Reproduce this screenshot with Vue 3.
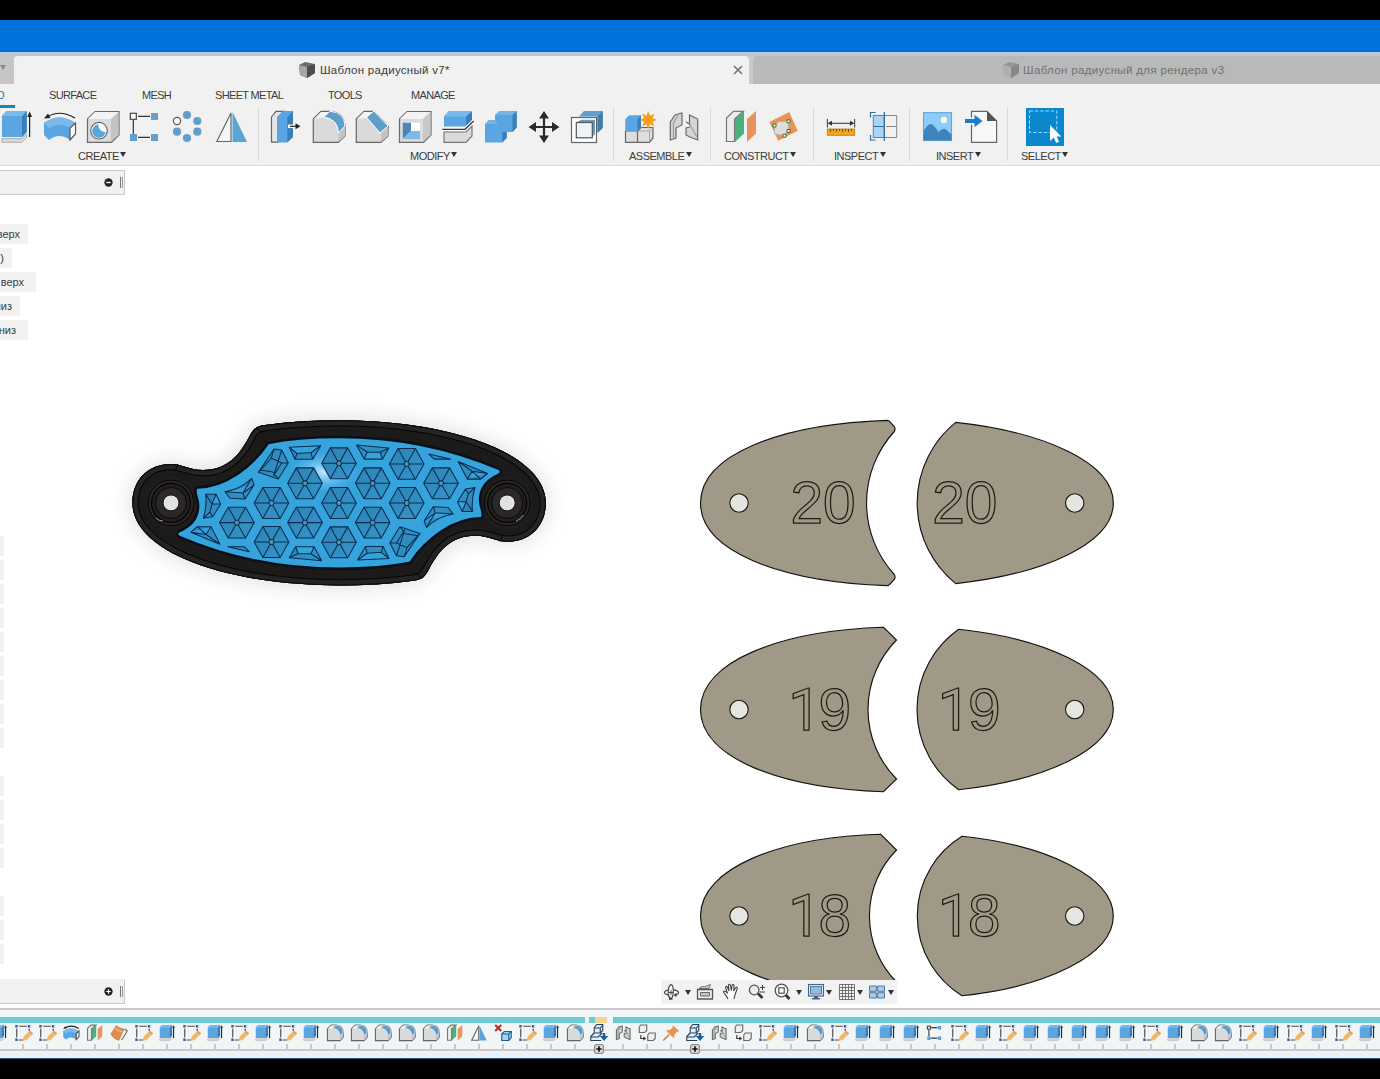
<script setup>
const groups = [
  { id: 'create', label: 'CREATE', icons: ['extrude', 'revolve', 'hole', 'pattern', 'circular', 'mirror'] },
  { id: 'modify', label: 'MODIFY', icons: ['press', 'fillet', 'chamfer', 'shell', 'split', 'combine', 'move', 'offset'] },
  { id: 'assemble', label: 'ASSEMBLE', icons: ['component', 'joint'] },
  { id: 'construct', label: 'CONSTRUCT', icons: ['plane', 'planepts'] },
  { id: 'inspect', label: 'INSPECT', icons: ['measure', 'section'] },
  { id: 'insert', label: 'INSERT', icons: ['image', 'derive'] },
  { id: 'select', label: 'SELECT', icons: ['select'] }
]

const ribbonTabs = [
  { text: 'SURFACE', cls: 'w93' },
  { text: 'MESH', cls: 'w73' },
  { text: 'SHEET METAL', cls: 'w113' },
  { text: 'TOOLS', cls: 'w83' },
  { text: 'MANAGE', cls: 'w83' }
]

const browserRows = [
  { text: 'верх', width: 28 },
  { text: ')', width: 12 },
  { text: 'верх', width: 36 },
  { text: 'низ', width: 20 },
  { text: 'низ', width: 28 }
]
const stubs = Array.from({ length: 18 }, (_, i) => i !== 9 && i !== 14)

const codes = {
  e: 'extrude', s: 'sketch', r: 'revolve', p: 'plane', o: 'patch', f: 'fillet', m: 'mirror',
  x: 'remove', i: 'insertcomp', j: 'joint', g: 'rigid', n: 'pin', t: 'pattern'
}
const features = [...'essrposesesesefffffpmxsefijgnijgsefseeetseseeeeeseffsesese'].map((c) => codes[c])

const nav = [
  { icon: 'orbit', gap: 1 }, { caret: true, gap: 2 },
  { icon: 'look', gap: 3 }, { icon: 'hand', gap: 6 }, { icon: 'zoom', gap: 6 }, { icon: 'fit', gap: 6 },
  { caret: true, gap: 2 }, { icon: 'display', gap: 3 }, { caret: true, gap: -1 },
  { icon: 'grid', gap: 4 }, { caret: true, gap: -1 }, { icon: 'views', gap: 3 }, { caret: true, gap: 0 }
]

// The handle body has two-fold rotational symmetry about this point.
const C = [339.1, 502.9]
const turn = ([x, y]) => [2 * C[0] - x, 2 * C[1] - y]
const cubic = (pts) => {
  let d = ''
  for (let i = 0; i < pts.length; i += 3) d += 'C' + pts.slice(i, i + 3).map((p) => p.join(' ')).join(' ')
  return d
}
const symmetric = (start, pts) => 'M' + start.join(' ') + cubic(pts) + cubic(pts.map(turn)) + 'Z'

const body = symmetric([132.4, 502.9], [
  [132.4, 480], [148, 464], [171, 464],
  [183, 464], [188, 470], [203, 470],
  [228, 470], [240, 454], [249, 437],
  [253, 429], [256, 426], [265, 425],
  [290, 421.5], [315, 420.3], [339, 420.3],
  [384, 420.3], [446, 426], [494, 447],
  [530, 463], [545.8, 483], [545.8, 502.9]
])
const insert = symmetric([196.5, 487.5], [
  [225, 488], [253, 466], [268, 443],
  [290, 438.5], [315, 437], [339, 437],
  [395, 437], [450, 448], [499, 469],
  [502, 471], [502, 473], [498, 475],
  [487, 480], [480, 487], [480, 500],
  [480, 508], [485, 513], [481.7, 518.3]
])

const hexCenters = [
  [339, 463.3], [406.7, 463.9], [305, 483.3], [372.7, 483.3], [441, 483.3],
  [271.5, 503], [339, 503], [406.7, 503],
  [236.9, 522.6], [305, 522.6], [372.7, 522.6], [271.5, 542], [339, 542.3]
]
const corners = (cx, cy, r) =>
  Array.from({ length: 6 }, (_, i) => [cx + r * Math.cos((i * Math.PI) / 3), cy + r * 1.03 * Math.sin((i * Math.PI) / 3)])
const hexes = hexCenters.map(([cx, cy]) => {
  const o = corners(cx, cy, 17.3)
  const n = corners(cx, cy, 2.7)
  return {
    outer: o.join(' '),
    inner: n.join(' '),
    rays: o.map((p, i) => `M${p.join(' ')}L${n[i].join(' ')}`).join('')
  }
})
const cells = [
  'M274 449L281.7 450L288.3 462.7L278.3 479L258.3 472.3ZM274 449L271.5 458L281.7 463L273.5 476M271.5 458L258.3 472.3M281.7 450L273.5 476M288.3 462.7L281.7 463M260 470L273 472L278.3 479',
  'M289.3 447.3L320.7 445.7L312.7 459.3L295 459.3ZM289.3 447.3L297 453.5L311 452.5L320.7 445.7M297 453.5L295 459.3M311 452.5L312.7 459.3',
  'M225 491.7Q241 489 251.7 478.3L254 485L245 499L230 498.3ZM225 491.7L243 493L254 485M243 493L245 499M243 493L251.7 478.3',
  'M205.7 494.3L216 494.3L220.7 504L212.7 516.7L203.3 518.3Q207 506 205.7 494.3ZM216 494.3L212 504L220.7 504M212 504L210 512L203.3 518.3M205.7 494.3L212 504M210 512L212.7 516.7',
  'M190.7 532.3L197.3 526.7L211 526.7L220 544.3ZM190.7 532.3L206 534.5L211 526.7M206 534.5L220 544.3M197.3 526.7L206 534.5',
  'M227.7 546.7L244 546.7L249.3 551.7Z',
  'M295.7 546.7L314 546.7L321.7 560.7L289.3 557.7ZM295.7 546.7L298 553.5L311 553.8L314 546.7M298 553.5L289.3 557.7M311 553.8L321.7 560.7'
]

const plates = [
  { n: '20', cy: 503, tip: [887, 82.6], lip: [894.3, 71.5], neck: 106, shoulder: [955.7, 80.6], belly: 103.6, rx: 932.3, round: true },
  { n: '19', cy: 709.5, tip: [883.5, 82.2], lip: [896.5, 69.5], neck: 99, shoulder: [958.7, 80.2], belly: 98, rx: 939.5 },
  { n: '18', cy: 916, tip: [880.5, 81.8], lip: [896.5, 66], neck: 94, shoulder: [962, 79.7], belly: 93.4, rx: 939.5 }
].map((p) => {
  const [tx, th] = p.tip
  const [lx, lh] = p.lip
  const [sx, sh] = p.shoulder
  const y = p.cy
  const cornerA = p.round ? `Q${tx + 2} ${y - th} ${tx + 3} ${y - th + 1.5}L${lx} ${y - lh - 5}Q${lx + 1.5} ${y - lh - 2.5} ${lx} ${y - lh}` : `L${lx} ${y - lh}`
  const cornerB = p.round ? `Q${lx + 1.5} ${y + lh + 2.5} ${lx} ${y + lh + 5}L${tx + 3} ${y + th - 1.5}Q${tx + 2} ${y + th} ${tx} ${y + th}` : `L${tx} ${y + th}`
  return {
    ...p,
    left: `M700.5 ${y}C700.5 ${y - 48} 780 ${y - 79} ${tx} ${y - th}${cornerA}A${p.neck} ${p.neck} 0 0 0 ${lx} ${y + lh}${cornerB}C780 ${y + 79} 700.5 ${y + 48} 700.5 ${y}Z`,
    right: `M${sx} ${y - sh}C1045 ${y - 71} 1113.3 ${y - 40} 1113.3 ${y}C1113.3 ${y + 40} 1045 ${y + 71} ${sx} ${y + sh}A${p.belly} ${p.belly} 0 0 1 ${sx} ${y - sh}Z`
  }
})
</script>

<template>
  <div class="app">
    <svg class="defs" width="0" height="0" aria-hidden="true">
      <symbol id="extrude" viewBox="0 0 43 40">
        <path d="M7 9L11.5 4H31.7V25L27 30H7Z" fill="#5aa5e2" /><path d="M27 9L31.7 4V25L27 30Z" fill="#3b7fba" /><path d="M7 9L11.5 4H31.7L27 9Z" fill="#79b9ec" />
        <path d="M7 31.5H27L31.7 27V30.5L27 35.3H7Z" fill="#d8d8d8" stroke="#999" stroke-width=".7" />
        <path d="M34.6 30V6" stroke="#222" fill="none" /><path d="M32.3 10L34.6 4.5L37 10Z" fill="#222" />
      </symbol>
      <symbol id="revolve" viewBox="0 0 43 40">
        <path d="M6 16Q21 5 37.5 16L32 33Q21 25 11 33L6 28Z" fill="#5aa5e2" /><path d="M6 16Q21 5 37.5 16L32 21Q21 14 11 21Z" fill="#79b9ec" />
        <path d="M32 21L37.5 16V27L32 33Z" fill="#fff" stroke="#555" /><path d="M9 10Q22 2 37 11" fill="none" stroke="#222" /><path d="M6 11.5L10 6.5L12.5 11Z" fill="#222" />
      </symbol>
      <symbol id="hole" viewBox="0 0 43 40">
        <path d="M6.5 12L14 4.5H38V28L30.5 35.3H6.5Z" fill="#dcdcdc" stroke="#6a6a6a" /><path d="M7 12L14 5H37.5L30 12Z" fill="#f3f3f3" /><path d="M30 12L37.5 5V28L30 35Z" fill="#c3c3c3" />
        <circle cx="18" cy="23.7" r="8.3" fill="#fff" stroke="#666" /><path d="M17 17.3A6.8 6.8 0 1 0 24.7 25Q18 25 17 17.3Z" fill="#5aa5d8" />
      </symbol>
      <symbol id="pattern" viewBox="0 0 43 40">
        <path d="M9.3 13V27M14 9.3H26M14 30.3H26" stroke="#333" fill="none" /><rect x="6.3" y="6.3" width="6" height="6" fill="#fff" stroke="#444" />
        <path d="M27 6h7v7h-7zM6 27h7v7H6zM27 27h7v7h-7z" fill="#679fcb" />
      </symbol>
      <symbol id="circular" viewBox="0 0 43 40">
        <g fill="#639dca"><circle cx="20" cy="8" r="4.1" /><circle cx="30.3" cy="14" r="4.1" /><circle cx="30.3" cy="24.7" r="4.1" /><circle cx="20" cy="31" r="4.1" /><circle cx="10" cy="24.7" r="4.1" /></g><circle cx="10" cy="14" r="3.6" fill="#fff" stroke="#555" />
      </symbol>
      <symbol id="mirror" viewBox="0 0 43 40"><path d="M6.8 34.5L21 6V34.5Z" fill="#f6f6f6" stroke="#666" /><path d="M22.5 5L37 35H22.5Z" fill="#5aa5d8" /></symbol>
      <symbol id="press" viewBox="0 0 43 40">
        <path d="M7.5 10L12 4.3H20L14 10V35.2H7.5Z" fill="#e6e6e6" stroke="#666" /><path d="M13.5 10L19 4H29V30L23.3 35.5H13.5Z" fill="#5aa5e2" /><path d="M23.3 10L29 4V30L23.3 35.5Z" fill="#3b7fba" />
        <path d="M24 19.3H32" stroke="#fff" stroke-width="3.5" /><path d="M26 19.3H32" stroke="#222" /><path d="M31.5 16.3L36.5 19.3L31.5 22.3Z" fill="#222" />
      </symbol>
      <symbol id="fillet" viewBox="0 0 43 40">
        <path d="M6.3 12L14 4.3H23Q38 5 38 20V29L31.3 35.3H6.3Z" fill="#dadada" stroke="#666" /><path d="M7 12L14 5H23L17 10Z" fill="#f4f4f4" /><path d="M31.5 26L38 20V29L31.5 35Z" fill="#c2c2c2" />
        <path d="M16.5 10L23 4.3Q37.8 5 38 19L31.5 26Q31 12 16.5 10Z" fill="#5c9fcd" stroke="#fff" stroke-width="1" />
      </symbol>
      <symbol id="chamfer" viewBox="0 0 43 40">
        <path d="M6.3 12L14 4.3H24L38 19V29L31 35.3H6.3Z" fill="#dadada" stroke="#666" /><path d="M7 12L14 5H23L17 11Z" fill="#f4f4f4" /><path d="M31 26L38 20V29L31 35Z" fill="#c2c2c2" /><path d="M16.5 10.3L24 4L38 19L30 26Z" fill="#5c9fcd" stroke="#fff" stroke-width="1" />
      </symbol>
      <symbol id="shell" viewBox="0 0 43 40">
        <path d="M6.5 12L14 4.5H38V28L30.5 35.3H6.5Z" fill="#dcdcdc" stroke="#6a6a6a" /><path d="M7 12L14 5H37.5L30 12Z" fill="#f3f3f3" /><path d="M30 12L37.5 5V28L30 35Z" fill="#c8c8c8" />
        <path d="M9.7 15.7H27V32.3H9.7Z" fill="#fff" /><path d="M9.7 15.7L18 15.7V24L9.7 32.3Z" fill="#4a87b8" /><path d="M18 24H27V32.3H9.7Z" fill="#7cb9e6" />
      </symbol>
      <symbol id="split" viewBox="0 0 43 40">
        <path d="M8 9.5L13 4H36V13L30 19.5H8Z" fill="#5aa5e2" /><path d="M30 9.5L36 4V13L30 19.5Z" fill="#3b7fba" /><path d="M8 9.5L13 4H36L30 9.5Z" fill="#79b9ec" />
        <path d="M8 25H30L36 19V29L30 35.3H8Z" fill="#dadada" stroke="#777" /><path d="M6.3 22.3H29L37.7 14" fill="none" stroke="#fff" stroke-width="3.5" /><path d="M6.3 22.3H29L37.7 14" fill="none" stroke="#333" />
      </symbol>
      <symbol id="combine" viewBox="0 0 43 40">
        <path d="M6 17L10 13H16V8L20.5 4H37.7V20.5L33.7 25H27.7V31L23.3 35.5H6Z" fill="#5aa5e2" /><path d="M33.5 8L37.7 4V20.5L33.5 25ZM23.3 25L27.7 25V31L23.3 35.5Z" fill="#3b7fba" /><path d="M16 8L20.5 4H37.7L33.5 8ZM6 17L10 13H16L19 17Z" fill="#74b4e8" />
      </symbol>
      <symbol id="move" viewBox="0 0 43 40">
        <path d="M22 8V32M10 20H34" stroke="#2b2b2b" stroke-width="2.2" /><path d="M22 4L27 11.5H17ZM22 36L27 28.5H17ZM6.5 20L14 15V25ZM37.5 20L30 15V25Z" fill="#2b2b2b" />
      </symbol>
      <symbol id="offset" viewBox="0 0 43 40">
        <path d="M14 9.5L19 4H37.7V21L32.5 26V9.5Z" fill="#5f9fd0" /><path d="M32.5 9.5L37.7 4V21L32.5 26Z" fill="#3f7dac" /><rect x="6.5" y="10.5" width="25" height="25" fill="#fff" stroke="#666" />
        <path d="M12 15.5L16 12.8H30V27L27.3 30V15.5Z" fill="#5f9fd0" /><rect x="11.3" y="15.5" width="16" height="15.3" fill="#eef2f5" stroke="#555" />
      </symbol>
      <symbol id="component" viewBox="0 0 43 40">
        <path d="M6.5 24H18.5V35.3H6.5ZM18.5 24L22 20.5H34V31L30.5 35.3H18.5Z" fill="#dedede" stroke="#666" /><path d="M18.5 24H30.5V35M30.5 24L34 20.5" fill="none" stroke="#999" stroke-width=".8" /><path d="M6.3 12.3L10 8.3H22V20L18.5 24H6.3Z" fill="#5aa5e2" /><path d="M18.5 12.3L22 8.3V20L18.5 24Z" fill="#3b7fba" />
        <path d="M29.3 4L31.2 8.8L35.4 6.6L33.6 11L38 13L33.6 14.8L35.4 19.4L31.2 17.2L29.3 22L27.4 17.2L23 19.4L25 14.8L20.6 13L25 11L23 6.6L27.4 8.8Z" fill="#f4a019" />
      </symbol>
      <symbol id="joint" viewBox="0 0 43 40">
        <path d="M8.3 33V15L13 8L20 6V18L14 21V31Z" fill="#d5d5d5" stroke="#6a6a6a" /><path d="M11.5 32V16L16 8.5" fill="none" stroke="#999" /><path d="M24 15L27.5 17V8L35.7 12V33L29 30.5L24 28V21L28 20" fill="#d5d5d5" stroke="#6a6a6a" /><path d="M27.5 17L35 30" stroke="#999" />
      </symbol>
      <symbol id="plane" viewBox="0 0 43 40">
        <path d="M6.5 11L13.5 4.3H23.3L14.5 12V34.5H6.5Z" fill="#ececec" stroke="#777" /><path d="M15 12L24 4V26.5L15 35Z" fill="#4daf7b" /><path d="M27 12L36 4V26.5L27 35Z" fill="#e7935b" />
      </symbol>
      <symbol id="planepts" viewBox="0 0 43 40">
        <path d="M6.3 15L26.3 5L34.7 23.7L15.3 33.7Z" fill="#e7935b" /><path d="M11.5 19L16 14.5H25.5V23L21.3 28.5L11.5 27Z" fill="#ddd" stroke="#aaa" stroke-width=".6" /><g fill="#f7ffe8" stroke="#42702a" stroke-width="1"><path d="M10 17h3v3h-3zM24 12.8h3v3h-3zM24 22.5h3v3h-3zM20 27.2h3v3h-3z" /></g>
      </symbol>
      <symbol id="measure" viewBox="0 0 43 40">
        <path d="M7.4 12V20.5M34.6 12V20.5M9 16.3H33" stroke="#555" /><path d="M7.6 16.3L12 13.8V18.8ZM34.4 16.3L30 13.8V18.8Z" fill="#333" /><rect x="7.3" y="22" width="27.4" height="6.3" fill="#f4a51e" stroke="#b97c17" stroke-width=".8" /><path d="M10.5 22v3M13.5 22v2M16.5 22v3M19.5 22v2M22.5 22v3M25.5 22v2M28.5 22v3M31.5 22v2" stroke="#7a4d06" stroke-width="1" />
      </symbol>
      <symbol id="section" viewBox="0 0 43 40">
        <rect x="10.3" y="8.5" width="11" height="22" fill="#a9d4f6" stroke="#4c88b6" stroke-width="1" /><path d="M12.5 5.5H7.5V10.5M7.5 28V33H12.5" fill="none" stroke="#2e6c9a" /><path d="M21.3 8.5H33.7V30.5H21.3M23 19.5H33.7" fill="none" stroke="#888" stroke-width="1" /><path d="M21.3 5V34M10.3 19.5H21" stroke="#2e6c9a" />
      </symbol>
      <symbol id="image" viewBox="0 0 43 40">
        <rect x="7" y="5.3" width="29" height="28.7" fill="#8accfb" /><path d="M7 25Q13 15 16 17.5Q19 19 22.5 25Q27 20 30 22.5L36 28V34H7Z" fill="#3e83bb" /><circle cx="27.8" cy="13" r="3.2" fill="#fff6dd" /><rect x="7.4" y="5.7" width="28.2" height="27.9" fill="none" stroke="#5d9dcd" stroke-width=".9" />
      </symbol>
      <symbol id="derive" viewBox="0 0 43 40">
        <path d="M12.5 4.4H28L37.6 14V35.3H12.5Z" fill="#f7f7f7" stroke="#666" /><path d="M28 4V14H38Z" fill="#555" /><path d="M5 14H15" stroke="#f1f1f1" stroke-width="7" /><path d="M6 12H15.5V7.8L23.5 14L15.5 20.2V16H6Z" fill="#1b7dc5" />
      </symbol>
      <symbol id="select" viewBox="0 0 43 40">
        <rect x="3" y="1" width="38" height="38" fill="#0b87cf" /><rect x="6.5" y="4" width="27.3" height="21.5" fill="none" stroke="#8fe0ff" stroke-width="1" stroke-dasharray="3.5 1.8" /><path d="M27 18V34L30.8 30.6L33.2 36L36 34.7L33.6 29.6H38.3Z" fill="#fff" />
      </symbol>
      <symbol id="sketch" viewBox="0 0 43 40">
        <path d="M9 11V29M14 6.5H29M34 11V16M13 34H22" fill="none" stroke="#444" /><path d="M6 4h5v5H6zM31 4h5v5h-5zM6 31h5v5H6z" fill="#30649a" /><path d="M20 36L23 27L33 17L40 23L29 34Z" fill="#f3b76d" /><path d="M33 18L36 15L42 21L39 24Z" fill="#df9b85" />
      </symbol>
      <symbol id="patch" viewBox="0 0 43 40"><path d="M5 22L16 5Q24 12 32 12L21 35Q11 32 5 22Z" fill="#e08d51" stroke="#b9662c" stroke-width="1" /><path d="M33 12L38 16L27 34" fill="none" stroke="#666" /><path d="M13 10Q20 17 29 18" stroke="#f5b584" fill="none" /></symbol>
      <symbol id="remove" viewBox="0 0 43 40"><path d="M6 4L18 16M18 4L6 16" stroke="#bd2424" stroke-width="4" /><path d="M19 22L24 17H38V29L33 35H19Z" fill="#a8d4f4" stroke="#1f5d91" /><path d="M19 22H33V35M33 22L38 17" stroke="#1f5d91" fill="none" /></symbol>
      <symbol id="insertcomp" viewBox="0 0 43 40"><path d="M12 9L17 3H29V15L24 20H12ZM12 20L5 27V35H26M5 28H20L28 20" fill="#e2edf5" stroke="#263f5e" /><path d="M12 10H24V20M24 10L29 4" stroke="#263f5e" fill="none" /><path d="M29 20H34V26H40L31.5 36L23 26H29Z" fill="#1d5f9c" /></symbol>
      <symbol id="rigid" viewBox="0 0 43 40"><path d="M6 8L9 4H21V15L17 19H6ZM23 24L26 20H38V31L34 35H23Z" fill="#eee" stroke="#666" /><path d="M9 24V31H17" stroke="#333" fill="none" /><path d="M14 27L20 31L14 35Z" fill="#333" /></symbol>
      <symbol id="pin" viewBox="0 0 43 40"><path d="M25 4L38 16L33 18L28 24V31L11 15L19 14L25 9Z" fill="#e59655" /><path d="M18 23L6 35" stroke="#c9783a" stroke-width="3" /></symbol>

      <symbol id="doc" viewBox="0 0 18 18"><path d="M1 4L7 1L17 3V12L9 17L2 14Z" fill="#6b6b6b" /><path d="M1 4L9 6V17L2 14Z" fill="#a6a6a6" /><path d="M9 6L17 3V12L9 17Z" fill="#4c4c4c" /></symbol>

      <symbol id="orbit" viewBox="0 0 20 20"><path d="M7.2 13.3C1 12.3 1 8.7 7 7.9M11 7.9C18 8.5 18 12 13.5 13" fill="none" stroke="#444" stroke-width="1.1" /><path d="M7 15.5C5.5 11 6 4 9 2.5C12 3 12 13 9.5 17" fill="none" stroke="#444" stroke-width="1.1" /><path d="M9 8.3V12.7M6.8 10.5H11.2" stroke="#444" /><path d="M14.5 10.8V15L11.5 13.3ZM7 14L11 17.5L7 18Z" fill="#444" /></symbol>
      <symbol id="look" viewBox="0 0 20 20"><path d="M2.5 7.5H17.5V17H2.5Z" fill="#eee" stroke="#555" stroke-width="1.3" /><path d="M5.5 10.5H14.5V14H5.5Z" fill="#c4c4c4" stroke="#666" stroke-width="1" /><path d="M4 6.5L7 4.5L9.5 4.8L15.5 2.5L14 6.5Z" fill="#ccc" stroke="#666" stroke-width=".9" /></symbol>
      <symbol id="hand" viewBox="0 0 20 20"><path d="M7 17C6 14 2.5 11 2.5 9.5C3.5 8.5 5 9.5 6.5 11.5L4.5 5C5 3.8 6 4 6.5 5.2L8 9L7.5 3C8 1.8 9.2 2 9.5 3.2L10.3 8.5L11.2 3.2C11.8 2 13 2.6 13 3.7L12.7 9L14.8 5.5C15.8 4.7 16.6 5.5 16.2 6.6L14.3 12C14 14 13 15.5 13 17" fill="#fff" stroke="#444" stroke-width="1.1" /></symbol>
      <symbol id="zoom" viewBox="0 0 20 20"><circle cx="7.2" cy="8" r="4.8" fill="#eee" stroke="#555" stroke-width="1.3" /><path d="M11 11.5L15.5 16" stroke="#333" stroke-width="2.7" /><path d="M13 5.5H18M15.5 3V8M13 10H18" stroke="#444" stroke-width="1.1" /></symbol>
      <symbol id="fit" viewBox="0 0 20 20"><circle cx="8.5" cy="8.5" r="6.3" fill="#f8f8f8" stroke="#555" stroke-width="1.3" /><rect x="5.8" y="5.8" width="5.4" height="5.4" fill="#fff" stroke="#555" stroke-width="1.2" /><path d="M12.8 13L16.5 17" stroke="#333" stroke-width="2.7" /></symbol>
      <symbol id="display" viewBox="0 0 20 20"><rect x="2.5" y="2.5" width="15" height="11.5" fill="#e4eef7" stroke="#4b6178" stroke-width="1.1" /><rect x="4.5" y="4.5" width="11" height="7.5" fill="#92bde2" stroke="#507ca4" stroke-width="1" /><path d="M8 14H12V16H14V17.5H6V16H8Z" fill="#4b6178" /></symbol>
      <symbol id="grid" viewBox="0 0 20 20"><path d="M2.5 2.5H17.5V17.5H2.5ZM5.5 2.5V17.5M8.5 2.5V17.5M11.5 2.5V17.5M14.5 2.5V17.5M2.5 5.5H17.5M2.5 8.5H17.5M2.5 11.5H17.5M2.5 14.5H17.5" fill="#f8f8f8" stroke="#707070" stroke-width="1" /></symbol>
      <symbol id="views" viewBox="0 0 20 20"><path d="M2.5 4H9.3V9.3H2.5ZM10.7 4H17.5V9.3H10.7ZM2.5 10.7H9.3V16H2.5ZM10.7 10.7H17.5V16H10.7Z" fill="#a9ccea" stroke="#4f779c" stroke-width="1" /></symbol>
    </svg>

    <header class="titlebar"></header>
    <nav class="docs">
      <div class="doc-menu"><i class="caret faded"></i></div>
      <div class="doc active">
        <svg class="doc-icon"><use href="#doc" /></svg><span class="doc-title">Шаблон радиусный v7*</span>
        <svg class="close" viewBox="0 0 10 10"><path d="M1 1L9 9M9 1L1 9" stroke="#777" stroke-width="1.7" /></svg>
      </div>
      <div class="doc idle">
        <svg class="doc-icon"><use href="#doc" /></svg><span class="doc-title">Шаблон радиусный для рендера v3</span>
      </div>
    </nav>

    <section class="ribbon">
      <div class="tabs">
        <div class="solid"><span>SOLID</span></div>
        <div v-for="t in ribbonTabs" :key="t.text" class="tab" :class="t.cls">{{ t.text }}</div>
      </div>
      <div class="groups">
        <div v-for="g in groups" :key="g.id" class="group" :class="g.id">
          <div class="icons"><svg v-for="i in g.icons" :key="i" class="tool"><use :href="'#' + i" /></svg></div>
          <div class="label"><span>{{ g.label }}</span><i class="caret"></i></div>
        </div>
      </div>
    </section>

    <main class="stage">
      <svg class="scene" width="1380" height="842" viewBox="0 166 1380 842">
        <defs>
          <clipPath id="bodyClip"><path :d="body" /></clipPath>
          <clipPath id="insertClip"><path :d="insert" /></clipPath>
          <filter id="soft" x="-20%" y="-50%" width="140%" height="200%"><feGaussianBlur stdDeviation="12" /></filter>
          <radialGradient id="shine"><stop offset="0" stop-color="#d4f0ff" stop-opacity=".9" /><stop offset="1" stop-color="#6cc8ff" stop-opacity="0" /></radialGradient>
          <linearGradient id="cell" x1="0" y1="0" x2="1" y2="1"><stop offset="0" stop-color="#2c82b4" /><stop offset="1" stop-color="#3496c9" /></linearGradient>
        </defs>
        <path :d="body" fill="#000" opacity=".15" filter="url(#soft)" />
        <path :d="body" fill="#1c1b1a" />
        <g clip-path="url(#bodyClip)" fill="none">
          <path :d="body" stroke="#050505" stroke-width="12.5" />
          <path :d="body" stroke="#252423" stroke-width="10.5" />
          <path :d="body" stroke="#0a0a0a" stroke-width="2" />
        </g>
        <path d="M256 427L263 434M178 464L175 471M422 578.8L415 571.8M500 541.8L503 534.8" stroke="#050505" />
        <g v-for="x in [171, 507.2]" :key="x">
          <circle :cx="x" cy="502.9" r="27" fill="#1e1d1c" />
          <circle :cx="x" cy="502.9" r="22.8" fill="#2a2827" stroke="#050505" />
          <circle :cx="x" cy="502.9" r="19.5" fill="#211f1e" stroke="#050505" stroke-width="1.3" />
          <circle :cx="x" cy="502.9" r="15.5" fill="#2b2827" stroke="#080808" />
          <circle :cx="x" cy="502.9" r="8" fill="#e2e2e2" stroke="#111" />
        </g>
        <path d="M156 518Q159 521 163 521M516 521Q521 519 523 515" fill="none" stroke="#999" stroke-width="1" />
        <path :d="insert" fill="#35a3dc" stroke="#06101a" stroke-width="2.4" />
        <g clip-path="url(#insertClip)"><ellipse cx="324" cy="472" rx="34" ry="20" fill="url(#shine)" /></g>
        <g fill="url(#cell)" stroke="#0a2c52" stroke-width="1.05" stroke-linejoin="round">
          <g v-for="(h, i) in hexes" :key="i"><polygon :points="h.outer" /><path :d="h.rays" /><polygon :points="h.inner" fill="#5a91bb" /></g>
          <path v-for="(c, i) in cells" :key="'a' + i" :d="c" />
          <g :transform="`rotate(180 ${C[0]} ${C[1]})`"><path v-for="(c, i) in cells" :key="'b' + i" :d="c" /></g>
        </g>
        <g v-for="p in plates" :key="p.n">
          <path :d="p.left" class="plate" /><path :d="p.right" class="plate" />
          <circle cx="739" :cy="p.cy" r="9.2" class="pinhole" /><circle cx="1074.7" :cy="p.cy" r="9.2" class="pinhole" />
          <template v-for="(x, k) in [p.n === '20' ? 790.5 : 790, p.rx]" :key="k">
            <text v-if="p.n === '20'" :x="x" :y="p.cy + 20.4" class="digits">20</text>
            <text v-else :x="x - 1.8" :y="p.cy + 20.4" class="digits"><tspan class="one">1</tspan><tspan dx="-2.6">{{ p.n[1] }}</tspan></text>
          </template>
        </g>
      </svg>

      <aside class="browser">
        <div class="panel top"><svg class="knob" viewBox="0 0 10 10"><circle cx="5" cy="5" r="4.6" fill="#222" /><path d="M2.5 5H7.5" stroke="#fff" stroke-width="1.5" /></svg><i class="grip"></i></div>
        <div class="rows"><div v-for="(r, i) in browserRows" :key="i" class="row" :style="{ width: r.width + 'px' }"><span>{{ r.text }}</span></div></div>
        <div class="stubs"><i v-for="(s, i) in stubs" :key="i" :class="{ on: s }"></i></div>
        <div class="panel bottom"><svg class="knob" viewBox="0 0 10 10"><circle cx="5" cy="5" r="4.6" fill="#222" /><path d="M2.5 5H7.5M5 2.5V7.5" stroke="#fff" stroke-width="1.3" /></svg><i class="grip"></i></div>
      </aside>

      <div class="navbar">
        <template v-for="(n, i) in nav" :key="i">
          <i v-if="n.caret" class="caret nav-caret" :style="{ marginLeft: n.gap + 1 + 'px' }"></i>
          <svg v-else class="nav-icon" :style="{ marginLeft: n.gap + 'px' }"><use :href="'#' + n.icon" /></svg>
        </template>
      </div>
    </main>

    <footer class="timeline">
      <div class="track"><i class="run first"></i><i class="run tiny"></i><i class="run sand"></i><i class="run rest"></i></div>
      <div class="features">
        <div v-for="(f, i) in features" :key="i" class="feature">
          <svg class="mini"><use :href="'#' + f" /></svg>
          <svg v-if="f === 'insertcomp'" class="expand" viewBox="0 0 10 10"><rect x=".7" y=".7" width="8.6" height="8.6" rx="1" fill="#ddd" stroke="#777" /><path d="M2.3 5H7.7M5 2.3V7.7" stroke="#111" stroke-width="1.6" /></svg>
          <i v-else class="tick"></i>
        </div>
      </div>
    </footer>
  </div>
</template>

<style>
body { margin: 0; background: #000; }
</style>

<style scoped>
.app { width: 1380px; height: 1079px; box-sizing: border-box; padding-top: 20px; background: #000; overflow: hidden; display: flex; flex-direction: column; font-family: "Liberation Sans", Arial, sans-serif; font-size: 11px; color: #3c3c3c; }
.defs { position: absolute; }
.titlebar { height: 32px; flex: none; background: #0072dc; border-bottom: 2px solid #a9cdec; }
.docs { height: 30px; flex: none; box-sizing: border-box; border-top: 2px solid #c3c5c6; display: flex; background: #c9c9c9; }
.doc-menu { width: 14px; box-sizing: border-box; padding-top: 9px; background: #c6c6c6; }
.doc { display: flex; align-items: center; box-sizing: border-box; }
.active { width: 735px; background: #f1f1f1; padding-left: 284px; border-radius: 4px 4px 0 0; }
.idle { flex: 1; margin-left: 4px; background: #b9b9b9; padding-left: 249px; color: #707070; border-radius: 4px 0 0 0; }
.doc-icon { width: 18px; height: 18px; margin-right: 4px; flex: none; }
.idle .doc-icon { opacity: .45; margin-right: 3px; }
.doc-title { font-size: 11.5px; white-space: nowrap; letter-spacing: .29px; }
.idle .doc-title { letter-spacing: .35px; }
.close { width: 10px; height: 10px; margin-left: auto; margin-right: 6px; }
.caret { display: block; flex: none; width: 0; height: 0; border: 3px solid transparent; border-top: 5px solid #333; border-bottom: 0; }
.faded { border-top-color: #8b8b8b; }
.ribbon { height: 82px; flex: none; box-sizing: border-box; background: #f1f1f1; border-bottom: 1px solid #dcdcdc; }
.tabs { height: 23px; display: flex; line-height: 23px; letter-spacing: -.66px; }
.solid { width: 49px; height: 24px; }
.solid span { display: flex; justify-content: flex-end; width: 15px; box-sizing: border-box; padding-right: 11px; height: 24px; overflow: hidden; color: #1683b8; border-bottom: 3px solid #1b86b8; }
.tab { white-space: nowrap; }
.w93 { width: 93px; } .w73 { width: 73px; } .w113 { width: 113px; } .w83 { width: 83px; }
.groups { display: flex; height: 56px; }
.group { box-sizing: border-box; border-right: 1px solid #dadada; height: 54px; flex: none; }
.icons { display: flex; height: 40px; }
.tool { width: 43px; height: 40px; flex: none; stroke-width: 1.2; }
.label { display: flex; align-items: center; height: 17px; letter-spacing: -.5px; white-space: nowrap; }
.label .caret { margin-left: 1.5px; margin-top: -3px; }
.create { margin-left: -5px; width: 264px; } .create .label { padding-left: 83px; }
.modify { width: 355px; padding-left: 5px; } .modify .label { padding-left: 146px; }
.assemble { width: 97px; padding-left: 5px; } .assemble .label { padding-left: 10px; }
.construct { width: 103px; padding-left: 9px; } .construct .label { padding-left: 4px; }
.inspect { width: 96px; padding-left: 6px; } .inspect .label { padding-left: 14px; }
.insert { width: 98px; padding-left: 6px; } .insert .label { padding-left: 20px; }
.select { padding-left: 15px; border-right: 0; } .select .label { margin-left: -2px; }
.stage { position: relative; height: 842px; flex: none; background: #fff; overflow: hidden; }
.scene { display: block; }
.plate { fill: #a09988; stroke: #16130e; stroke-width: 1.15; }
.pinhole { fill: #e7e5e1; stroke: #1c1914; stroke-width: 1.1; }
.digits { font-family: "Liberation Sans", Arial, sans-serif; font-size: 58.5px; fill: none; stroke: #211a0e; stroke-width: 1.25; }
.one { font-family: Roboto, sans-serif; }
.browser { position: absolute; left: 0; top: 0; height: 842px; width: 125px; display: flex; flex-direction: column; }
.panel { width: 125px; height: 25px; flex: none; box-sizing: border-box; background: #f1f1f1; border: 1px solid #c9c9c9; border-left: 0; display: flex; align-items: center; justify-content: flex-end; }
.panel.top { margin-top: 4px; }
.panel.bottom { margin-top: auto; margin-bottom: 4px; border-top-color: #f1f1f1; }
.knob { width: 9px; height: 9px; margin-right: 7px; }
.grip { width: 1px; height: 11px; border-left: 1px solid #777; border-right: 1px solid #999; margin-right: 1px; }
.rows { margin-top: 29px; display: flex; flex-direction: column; gap: 4px; }
.row { height: 20px; line-height: 20px; display: flex; justify-content: flex-end; overflow: hidden; background: #f2f2f2; box-sizing: border-box; padding-right: 8px; }
.row:nth-child(3) { padding-right: 12px; } .row:nth-child(5) { padding-right: 12px; }
.stubs { margin-top: 196px; display: flex; flex-direction: column; gap: 4px; }
.stubs i { width: 4px; height: 20px; }
.stubs .on { background: #f0f0f0; }
.navbar { position: absolute; left: 661px; top: 814px; width: 236px; height: 24px; background: #f2f2f2; display: flex; align-items: center; }
.nav-icon { width: 20px; height: 20px; flex: none; }
.nav-caret { margin-right: 1px; margin-top: 1px; }
.timeline { height: 51px; flex: none; box-sizing: border-box; border-top: 2px solid #c8c8c8; border-bottom: 1px solid #31548c; background: linear-gradient(#f2f5f6 39px, #c8c8c8 39px, #c8c8c8 41px, #edf1f6 41px); padding-top: 7px; overflow: hidden; }
.track { display: flex; height: 6px; }
.run { background: #6bccd6; }
.first { width: 585px; } .tiny { width: 6px; margin-left: 4px; } .sand { width: 12px; background: #f3d58c; } .rest { flex: 1; margin-left: 6px; }
.features { display: flex; margin-left: -13px; height: 34px; }
.feature { width: 24px; flex: none; display: flex; flex-direction: column; align-items: center; }
.mini { width: 22px; height: 20px; stroke-width: 2.2; flex: none; }
.tick { width: 2px; height: 5px; margin-top: 1px; background: #c8c8c8; }
.expand { width: 10px; height: 10px; margin-top: 1px; margin-left: -1px; }
</style>
